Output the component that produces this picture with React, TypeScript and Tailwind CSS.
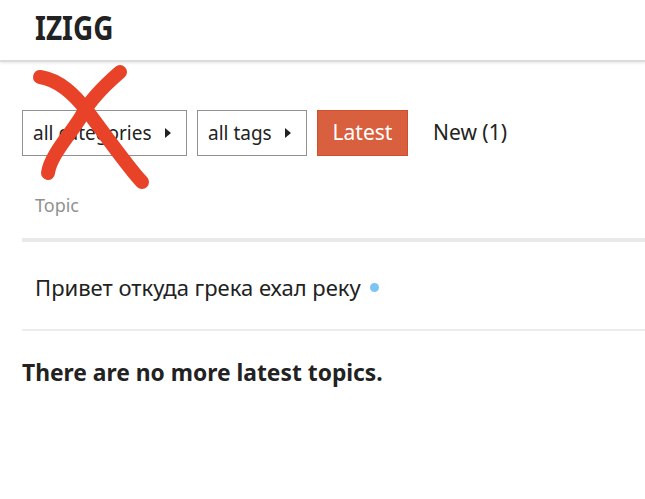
import React from "react";

function Caret() {
  return <span className="ml-[13px] w-0 h-0 border-y-[5px] border-y-transparent border-l-[6px] border-l-[#222]" />;
}

export default function App() {
  return (
    <div className="relative w-[645px] h-[499px] overflow-hidden bg-white text-[#222]" style={{ fontFamily: '"Noto Sans", "Open Sans", sans-serif' }}>
      <header className="h-[62px] border-b-2 border-[#dcdcdc] shadow-[0_1px_3px_rgba(0,0,0,0.1)] flex items-center pl-[35px] pb-[7px]">
        <h1 className="text-[28px] font-bold text-[#222] leading-none scale-y-[1.2] origin-center">IZIGG</h1>
      </header>
      <div className="pl-[22px]">
        <div className="flex items-center mt-[48px] gap-[10px]">
          <button className="h-[46px] w-[165px] border border-[#919191] flex items-center pl-[10px] text-[19px] text-[#222]">
            <span>all categories</span>
            <Caret />
          </button>
          <button className="h-[46px] w-[110px] border border-[#919191] flex items-center pl-[10px] text-[19px] text-[#222]">
            <span>all tags</span>
            <Caret />
          </button>
          <button className="h-[46px] w-[91px] bg-[#d8603f] border border-[#cf4f2d] text-white text-[21px] flex items-center justify-center">Latest</button>
          <div className="ml-[15px] text-[21px] text-[#222]">New (1)</div>
        </div>
        <div className="mt-[40px] pl-[13px] text-[18px] text-[#919191] leading-none">Topic</div>
        <div className="mt-[24px] h-[4px] bg-[#e9e9e9]" />
        <div className="h-[87px] flex items-center pl-[13px] pt-[4px] text-[22px] text-[#222]">
          <span>Привет откуда грека ехал реку</span>
          <span className="ml-[9px] w-[9px] h-[9px] rounded-full bg-[#7cc4f5]" />
        </div>
        <div className="h-[2px] bg-[#ececec]" />
        <div className="mt-[25px] text-[22.8px] font-bold text-[#222]">There are no more latest topics.</div>
      </div>
      <svg className="absolute left-0 top-0 pointer-events-none" width="645" height="499">
        <path d="M40 77 C 60 80, 75 95, 88 112 S 130 170, 142 182" stroke="#e84228" strokeWidth="14" fill="none" strokeLinecap="round" />
        <path d="M120 72 C 105 85, 90 100, 82 115 S 50 155, 48 173" stroke="#e84228" strokeWidth="14" fill="none" strokeLinecap="round" />
      </svg>
    </div>
  );
}
